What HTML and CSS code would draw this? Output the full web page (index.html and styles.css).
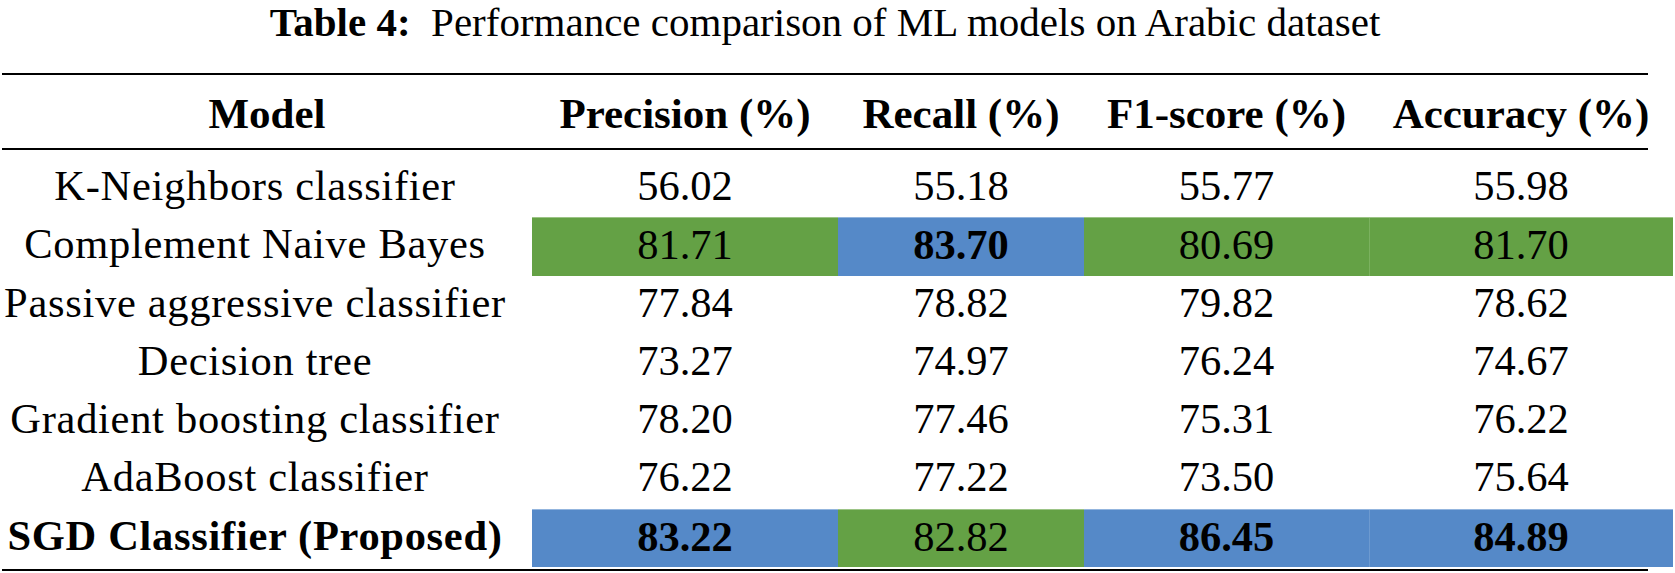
FILE: index.html
```html
<!DOCTYPE html>
<html lang="en">
<head>
<meta charset="utf-8">
<title>Table 4</title>
<link rel="stylesheet" href="styles.css">
</head>
<body>
<div class="page">
  <div class="caption"><b>Table 4:</b>&ensp;Performance comparison of ML models on Arabic dataset</div>
  <div class="rule rule-top"></div>
  <div class="row head">
    <div class="cell">Model</div>
    <div class="cell">Precision (%)</div>
    <div class="cell">Recall (%)</div>
    <div class="cell">F1-score (%)</div>
    <div class="cell">Accuracy (%)</div>
  </div>
  <div class="rule rule-mid"></div>
  <div class="body">
    <div class="row">
      <div class="cell name">K-Neighbors classifier</div>
      <div class="cell">56.02</div>
      <div class="cell">55.18</div>
      <div class="cell">55.77</div>
      <div class="cell">55.98</div>
    </div>
    <div class="row">
      <div class="cell name">Complement Naive Bayes</div>
      <div class="cell green">81.71</div>
      <div class="cell blue bold">83.70</div>
      <div class="cell green">80.69</div>
      <div class="cell green join">81.70</div>
    </div>
    <div class="row">
      <div class="cell name">Passive aggressive classifier</div>
      <div class="cell">77.84</div>
      <div class="cell">78.82</div>
      <div class="cell">79.82</div>
      <div class="cell">78.62</div>
    </div>
    <div class="row">
      <div class="cell name">Decision tree</div>
      <div class="cell">73.27</div>
      <div class="cell">74.97</div>
      <div class="cell">76.24</div>
      <div class="cell">74.67</div>
    </div>
    <div class="row">
      <div class="cell name">Gradient boosting classifier</div>
      <div class="cell">78.20</div>
      <div class="cell">77.46</div>
      <div class="cell">75.31</div>
      <div class="cell">76.22</div>
    </div>
    <div class="row">
      <div class="cell name">AdaBoost classifier</div>
      <div class="cell">76.22</div>
      <div class="cell">77.22</div>
      <div class="cell">73.50</div>
      <div class="cell">75.64</div>
    </div>
    <div class="row">
      <div class="cell name bold">SGD Classifier (Proposed)</div>
      <div class="cell blue bold">83.22</div>
      <div class="cell green">82.82</div>
      <div class="cell blue bold">86.45</div>
      <div class="cell blue bold join">84.89</div>
    </div>
  </div>
  <div class="rule rule-bottom"></div>
</div>
</body>
</html>
```

FILE: styles.css
```css
html, body {
  margin: 0;
  padding: 0;
  background: #ffffff;
}

.page {
  padding-left: 2px;
  width: 1673px;
  font-family: "Liberation Serif", "Times New Roman", serif;
  color: #000000;
}

.caption {
  width: 1646px;
  text-align: center;
  font-size: 41px;
  line-height: 44px;
  height: 44px;
}

.caption b {
  font-weight: 700;
}

.rule {
  width: 1646px;
  height: 2px;
  background: #000000;
}

.rule-top {
  margin-top: 29px;
}

.rule-mid {
  margin-top: 0;
}

.rule-bottom {
  margin-top: 2.5px;
}

.row {
  display: grid;
  grid-template-columns: 530px 306px 246px 285px 304px;
}

.head {
  padding-top: 9.5px;
  padding-bottom: 5.5px;
}

.head .cell {
  font-size: 43px;
  font-weight: 700;
  line-height: 58px;
  height: 58px;
  letter-spacing: 0;
}

.body {
  padding-top: 9px;
}

.body .row {
  height: 58.25px;
}

.cell {
  text-align: center;
  white-space: nowrap;
  font-size: 42.5px;
  line-height: 54px;
  padding-bottom: 4px;
  box-sizing: border-box;
}

.name {
  padding-right: 24px;
  letter-spacing: 0.7px;
}

.bold {
  font-weight: 700;
}

.green {
  background: #64a145;
  border-top: 1px solid #9cc486;
}

.blue {
  background: #5589c8;
  border-top: 1px solid #93b5de;
}

.join.green {
  box-shadow: inset 1px 0 0 #7bb15f;
}

.join.blue {
  box-shadow: inset 1px 0 0 #6d9ad0;
}

.green, .blue {
  line-height: 53px;
}
```
